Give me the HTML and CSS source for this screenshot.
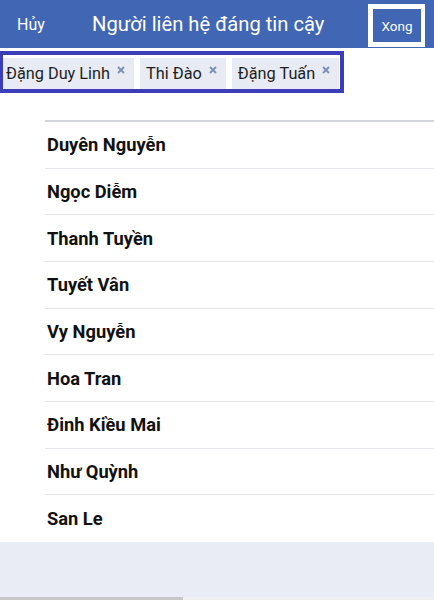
FILE: index.html
```html
<!DOCTYPE html>
<html lang="vi">
<head>
<meta charset="utf-8">
<title>Người liên hệ đáng tin cậy</title>
<link rel="stylesheet" href="styles.css">
</head>
<body>
<header class="topbar">
  <span class="cancel">Hủy</span>
  <h1 class="title">Người liên hệ đáng tin cậy</h1>
  <button class="done">Xong</button>
</header>
<div class="chips">
  <span class="chip chip-first">Đặng Duy Linh<svg class="x" viewBox="0 0 8 8"><path d="M1 1L7 7M7 1L1 7"/></svg></span>
  <span class="chip">Thi Đào<svg class="x" viewBox="0 0 8 8"><path d="M1 1L7 7M7 1L1 7"/></svg></span>
  <span class="chip">Đặng Tuấn<svg class="x" viewBox="0 0 8 8"><path d="M1 1L7 7M7 1L1 7"/></svg></span>
</div>
<ul class="list">
  <li>Duyên Nguyễn</li>
  <li>Ngọc Diễm</li>
  <li>Thanh Tuyền</li>
  <li>Tuyết Vân</li>
  <li>Vy Nguyễn</li>
  <li>Hoa Tran</li>
  <li>Đinh Kiều Mai</li>
  <li>Như Quỳnh</li>
  <li>San Le</li>
</ul>
<div class="footer"></div>
<div class="scrollbar"><span class="thumb"></span></div>
</body>
</html>
```

FILE: styles.css
```css
html, body {
  margin: 0;
  padding: 0;
  background: #ffffff;
  font-family: Roboto, "Noto Sans", "Liberation Sans", sans-serif;
  width: 434px;
  height: 600px;
  overflow: hidden;
}

.topbar {
  display: flex;
  align-items: center;
  height: 48px;
  background: #4166b3;
  color: #ffffff;
}

.cancel {
  box-sizing: border-box;
  width: 92px;
  padding-left: 17px;
  font-size: 16px;
}

.title {
  flex: 1;
  margin: 0;
  font-size: 20.2px;
  font-weight: 400;
  white-space: nowrap;
}

.done {
  align-self: flex-start;
  box-sizing: border-box;
  margin: 4px 9px 0 0;
  width: 57px;
  height: 43px;
  border: 5px solid #ffffff;
  border-right-width: 4px;
  background: #4166b3;
  color: #ffffff;
  font-family: inherit;
  font-size: 13.5px;
  padding: 0;
}

.chips {
  display: inline-flex;
  gap: 6px;
  margin-top: 3px;
  box-sizing: border-box;
  height: 42px;
  padding: 3px 1px 0 0;
  border: 4px solid #3b3eb8;
  border-left-width: 3px;
}

.chip {
  display: flex;
  align-items: center;
  height: 31px;
  box-sizing: border-box;
  padding: 0 9px 0 6px;
  background: #e8ebf3;
  color: #1c1e21;
  font-size: 16.3px;
  white-space: nowrap;
}

.chip-first {
  padding-left: 3px;
}

.x {
  align-self: flex-start;
  width: 8px;
  height: 8px;
  margin: 8px 0 0 7px;
  stroke: #7d8db5;
  stroke-width: 1.8;
  fill: none;
}

.list {
  list-style: none;
  margin: 27px 0 0 0;
  padding: 0 0 0 45px;
}

.list::before {
  content: "";
  display: block;
  height: 2px;
  background: #d4d5d9;
}

.list li {
  box-sizing: border-box;
  height: 46.67px;
  display: flex;
  align-items: center;
  padding-left: 2px;
  border-bottom: 1px solid #e3e4e7;
  font-size: 18.3px;
  font-weight: 700;
  color: #111111;
}

.list li:last-child {
  border-bottom: 0;
}

.footer {
  height: 55px;
  background: #e9ecf4;
}

.scrollbar {
  display: flex;
  height: 3px;
  background: #eef0f4;
}

.thumb {
  width: 183px;
  background: #c7c7c9;
}
```
